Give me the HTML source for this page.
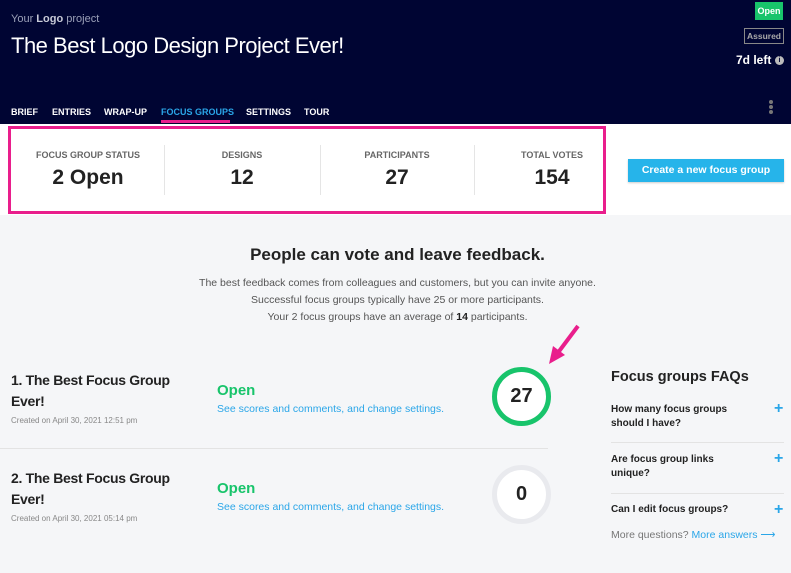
<!DOCTYPE html>
<html><head><meta charset="utf-8"><style>
*{margin:0;padding:0;box-sizing:border-box}
body{width:791px;height:573px;overflow:hidden;background:#f5f6f8;font-family:"Liberation Sans",sans-serif;position:relative;color:#222}
.a{position:absolute;white-space:nowrap}
.hdr{position:absolute;left:0;top:0;width:791px;height:124px;background:#000533}
.nav{font-size:9px;font-weight:bold;color:#fff;top:107px}
.lab{font-size:9px;font-weight:bold;color:#666;text-align:center;width:150px}
.num{font-size:21px;font-weight:bold;color:#222;text-align:center;width:150px}
.dv{position:absolute;width:1px;background:#e5e5e5;top:145px;height:50px}
.t{font-size:14px;font-weight:bold;line-height:21px;color:#222;letter-spacing:-0.3px}
.cr{font-size:8px;color:#888}
.op{font-size:15px;font-weight:bold;color:#18c46b}
.lk{font-size:10.5px;color:#2aa6e8}
.q{font-size:10px;font-weight:bold;line-height:14px;color:#222}
.pl{color:#2aa6e8;font-size:16px;font-weight:bold;left:774px}
.hl{position:absolute;left:611px;width:173px;height:1px;background:#e3e3e3}
</style></head><body>
<div class="hdr"></div>
<div class="a" style="left:11px;top:13px;font-size:11px;color:#9aa0b8">Your <b style="color:#c8cbd8">Logo</b> project</div>
<div class="a" style="left:11px;top:33px;font-size:22px;color:#fff;letter-spacing:-0.5px">The Best Logo Design Project Ever!</div>
<div class="a" style="left:755px;top:2px;width:28px;height:18px;background:#18c46b;color:#fff;font-size:9px;font-weight:bold;text-align:center;line-height:18px">Open</div>
<div class="a" style="left:744px;top:28px;width:40px;height:16px;border:1px solid #888;color:#aaa;font-size:8.5px;font-weight:bold;text-align:center;line-height:14px">Assured</div>
<div class="a" style="left:736px;top:53px;font-size:12px;font-weight:bold;color:#fff">7d left</div>
<div class="a" style="left:775px;top:56px;width:9px;height:9px;border-radius:50%;background:#bbb;color:#000533;font-size:7px;font-weight:bold;text-align:center;line-height:9px">i</div>
<div class="a" style="left:769px;top:100px;width:4px;height:4px;border-radius:50%;background:#777;box-shadow:0 5px 0 #777,0 10px 0 #777"></div>
<div class="a nav" style="left:11px">BRIEF</div>
<div class="a nav" style="left:52px">ENTRIES</div>
<div class="a nav" style="left:104px">WRAP-UP</div>
<div class="a nav" style="left:161px;color:#2aa6e8">FOCUS GROUPS</div>
<div class="a" style="left:161px;top:120px;width:69px;height:3px;background:#e91e8c"></div>
<div class="a nav" style="left:246px">SETTINGS</div>
<div class="a nav" style="left:304px">TOUR</div>
<div class="a" style="left:0;top:124px;width:791px;height:91px;background:#fff"></div>
<div class="a" style="left:8px;top:126px;width:598px;height:88px;border:3px solid #e91e8c"></div>
<div class="a lab" style="left:13px;top:150px">FOCUS GROUP STATUS</div>
<div class="a num" style="left:13px;top:166px">2 Open</div>
<div class="dv" style="left:164px"></div>
<div class="a lab" style="left:167px;top:150px">DESIGNS</div>
<div class="a num" style="left:167px;top:166px">12</div>
<div class="dv" style="left:320px"></div>
<div class="a lab" style="left:322px;top:150px">PARTICIPANTS</div>
<div class="a num" style="left:322px;top:166px">27</div>
<div class="dv" style="left:474px"></div>
<div class="a lab" style="left:477px;top:150px">TOTAL VOTES</div>
<div class="a num" style="left:477px;top:166px">154</div>
<div class="a" style="left:628px;top:159px;width:156px;height:23px;background:#26b4ea;color:#fff;font-size:10.5px;font-weight:bold;text-align:center;line-height:23px;box-shadow:0 1px 2px rgba(0,0,0,.2)">Create a new focus group</div>
<div class="a" style="left:0;top:245px;width:795px;text-align:center;font-size:17px;font-weight:bold;color:#222">People can vote and leave feedback.</div>
<div class="a" style="left:0;top:275px;width:795px;text-align:center;font-size:10.5px;color:#555;line-height:17px">The best feedback comes from colleagues and customers, but you can invite anyone.<br>Successful focus groups typically have 25 or more participants.<br>Your 2 focus groups have an average of <b style="color:#222">14</b> participants.</div>
<div class="a t" style="left:11px;top:370px">1. The Best Focus Group<br>Ever!</div>
<div class="a cr" style="left:11px;top:416px">Created on April 30, 2021 12:51 pm</div>
<div class="a op" style="left:217px;top:382px">Open</div>
<div class="a lk" style="left:217px;top:403px">See scores and comments, and change settings.</div>
<div class="a" style="left:492px;top:367px;width:59px;height:59px;border-radius:50%;border:5px solid #18c46b;background:#fff;text-align:center;line-height:49px;font-size:20px;font-weight:bold">27</div>
<div class="a" style="left:0;top:448px;width:548px;height:1px;background:#e3e3e3"></div>
<div class="a t" style="left:11px;top:468px">2. The Best Focus Group<br>Ever!</div>
<div class="a cr" style="left:11px;top:514px">Created on April 30, 2021 05:14 pm</div>
<div class="a op" style="left:217px;top:480px">Open</div>
<div class="a lk" style="left:217px;top:501px">See scores and comments, and change settings.</div>
<div class="a" style="left:492px;top:465px;width:59px;height:59px;border-radius:50%;border:5px solid #e9eaee;background:#fff;text-align:center;line-height:49px;font-size:20px;font-weight:bold">0</div>
<svg class="a" style="left:545px;top:322px" width="40" height="45"><path d="M33 4 L12 32" stroke="#e91e8c" stroke-width="4"/><path d="M4 42 L8 24 L20 33 Z" fill="#e91e8c"/></svg>
<div class="a" style="left:611px;top:369px;font-size:14.5px;font-weight:bold;color:#222">Focus groups FAQs</div>
<div class="a q" style="left:611px;top:403px">How many focus groups<br>should I have?</div>
<div class="a pl" style="top:400px">+</div>
<div class="hl" style="top:442px"></div>
<div class="a q" style="left:611px;top:453px">Are focus group links<br>unique?</div>
<div class="a pl" style="top:450px">+</div>
<div class="hl" style="top:493px"></div>
<div class="a q" style="left:611px;top:503px">Can I edit focus groups?</div>
<div class="a pl" style="top:501px">+</div>
<div class="a" style="left:611px;top:529px;font-size:10.5px;color:#777">More questions? <span style="color:#2aa6e8">More answers ⟶</span></div>
</body></html>
